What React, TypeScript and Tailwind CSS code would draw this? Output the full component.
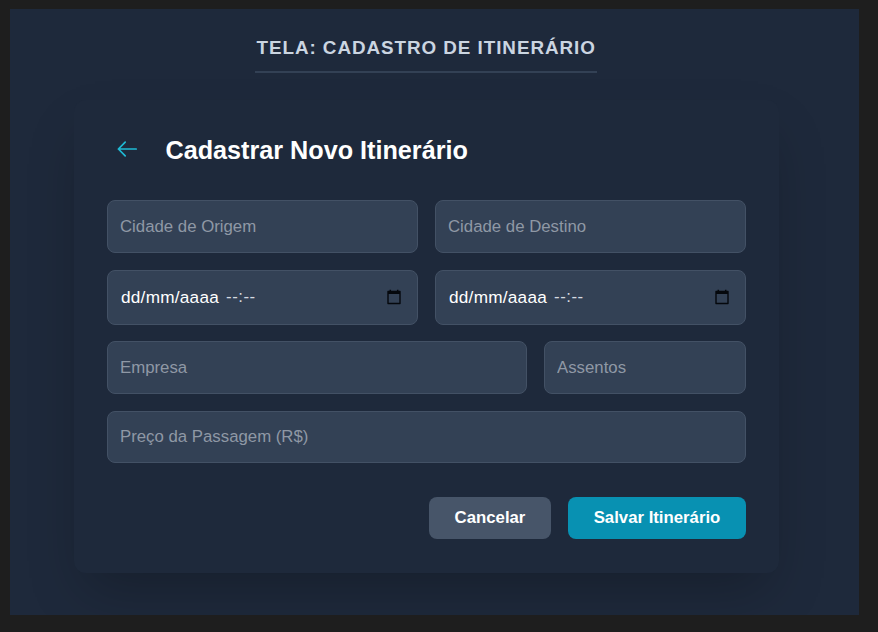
const field =
  'block w-full min-w-0 rounded-[8px] border border-[#435165] bg-[#334155] px-[12.5px] text-[16.8px] leading-[24px] text-white outline-none placeholder:text-[#8f98a5]';

function TextField({ label }: { label: string }) {
  return <input type="text" placeholder={label} aria-label={label} className={`${field} h-[52.5px]`} />;
}

function CalendarIcon() {
  return (
    <svg width="14" height="16" viewBox="0 0 14 16" fill="none" aria-hidden="true">
      <path d="M3.3 0.8v2M10.7 0.8v2" stroke="#05080d" strokeWidth="1.5" />
      <path d="M1 2.5h12v12H1z" stroke="#05080d" strokeWidth="1.4" strokeLinejoin="round" />
      <path d="M1 2h12v3H1z" fill="#05080d" />
    </svg>
  );
}

function DateField() {
  return (
    <div className={`${field} h-[54.9px]`}>
      <div className="flex h-full items-center justify-between pb-[1px] pl-[1px] pr-[3px]">
        <div className="flex gap-[7px] whitespace-pre">
          <span className="text-[17.2px] tracking-[0.25px]">dd/mm/aaaa</span>
          <span className="tracking-[0.5px] text-[#d5dae0]">--:--</span>
        </div>
        <CalendarIcon />
      </div>
    </div>
  );
}

export default function App() {
  return (
    <div className="h-[632px] w-[878px] overflow-hidden bg-[#1e1e1e] pl-[10px] pt-[9px] font-['Liberation_Sans',Arial,sans-serif]">
      <main className="flex h-[606px] w-[849px] flex-col items-center overflow-hidden bg-[#1e293b] pr-[17px] pt-[24px]">
        <h1 className="h-[40px] w-[342px] whitespace-nowrap border-b-2 border-[#334155] pl-[1.5px] text-[18.85px] font-bold leading-[29px] tracking-[0.94px] text-[#cbd5e1]">
          TELA: CADASTRO DE ITINERÁRIO
        </h1>
        <section className="mt-[27px] h-[473px] w-[705px] shrink-0 rounded-[12px] bg-[#1e293b] px-[33px] pt-[34px] shadow-[0_26px_52px_-12px_rgba(0,0,0,0.25)]">
          <header className="flex h-[33px] items-center">
            <button type="button" aria-label="Voltar" className="mb-[4px] ml-[9px] flex w-[50px] items-center">
              <svg width="22" height="18" viewBox="0 0 22 18" fill="none" stroke="#1fbad5" strokeWidth="1.7" strokeLinecap="round" strokeLinejoin="round" aria-hidden="true">
                <path d="M20.2 9H2.4M9.2 2.2 2.4 9l6.8 6.8" />
              </svg>
            </button>
            <h2 className="whitespace-nowrap text-[25.2px] font-bold text-white">Cadastrar Novo Itinerário</h2>
          </header>
          <form className="mt-[33.4px] flex flex-col gap-[16.75px]" onSubmit={(e) => e.preventDefault()}>
            <div className="grid grid-cols-2 gap-[17px]">
              <TextField label="Cidade de Origem" />
              <TextField label="Cidade de Destino" />
            </div>
            <div className="grid grid-cols-2 gap-[17px]">
              <DateField />
              <DateField />
            </div>
            <div className="grid grid-cols-[420px_1fr] gap-[17px]">
              <TextField label="Empresa" />
              <TextField label="Assentos" />
            </div>
            <TextField label="Preço da Passagem (R$)" />
            <div className="mt-[17.25px] flex justify-end gap-[17px]">
              <button type="button" className="h-[42px] w-[122px] rounded-[8px] bg-[#475569] pl-[1px] text-[16.75px] font-bold text-white">
                Cancelar
              </button>
              <button type="submit" className="h-[42px] w-[178px] rounded-[8px] bg-[#0891b2] pl-[1px] text-[16.75px] font-bold text-white">
                Salvar Itinerário
              </button>
            </div>
          </form>
        </section>
      </main>
    </div>
  );
}
